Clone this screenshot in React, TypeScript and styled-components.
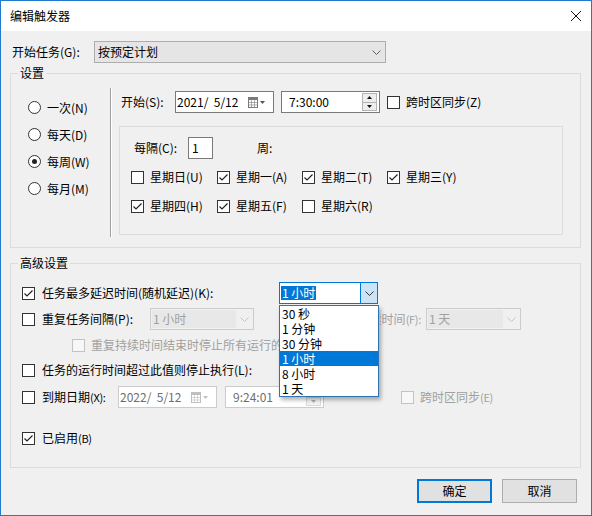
import React from "react";
import styled, { createGlobalStyle } from "styled-components";

const GlobalStyle = createGlobalStyle`
  * { box-sizing: border-box; }
  html, body { margin: 0; padding: 0; background: #f0f0f0; }
  body {
    font-family: "Noto Sans CJK SC", "Noto Sans", sans-serif;
    font-size: 12px;
    line-height: 16px;
    color: #000;
  }
`;

const Dialog = styled.div`
  width: 592px;
  height: 516px;
  border: 1px solid #1f7ad0;
  background: #f0f0f0;
  display: flex;
  flex-direction: column;
  overflow: hidden;
`;

const TitleBar = styled.div`
  flex: none;
  height: 30px;
  background: #fff;
  display: flex;
  align-items: center;
  justify-content: space-between;
  padding: 0 10px 0 9px;
`;

const TitleText = styled.span`
  font-size: 12px;
`;

const CloseIcon = styled.svg`
  display: block;
`;

const Body = styled.div`
  flex: 1;
  display: flex;
  flex-direction: column;
  padding: 10px 10px 0 9px;
`;

const TaskRow = styled.div`
  display: flex;
  align-items: center;
  height: 22px;
`;

const TaskLabel = styled.span`
  width: 84px;
  padding-left: 2px;
  white-space: nowrap;
`;

type ComboVariant = "static" | "open" | "disabled";

const ComboBox = styled.div<{ $width: number; $variant: ComboVariant; $ml?: number }>`
  position: relative;
  flex: none;
  width: ${(p) => p.$width}px;
  height: 22px;
  margin-left: ${(p) => p.$ml ?? 0}px;
  display: flex;
  align-items: stretch;
  border: 1px solid
    ${(p) => (p.$variant === "open" ? "#0078d7" : p.$variant === "disabled" ? "#cccccc" : "#adadad")};
  background: ${(p) => (p.$variant === "open" ? "#fff" : p.$variant === "disabled" ? "#f0f0f0" : "#e5e5e5")};
  color: ${(p) => (p.$variant === "disabled" ? "#a0a0a0" : "#000")};
`;

const ComboField = styled.div<{ $variant: ComboVariant }>`
  flex: 1;
  display: flex;
  align-items: center;
  white-space: pre;
  padding-left: ${(p) => (p.$variant === "static" ? 3 : 1)}px;
  margin: ${(p) => (p.$variant === "disabled" ? "1px 0 1px 1px" : "0")};
  background: ${(p) => (p.$variant === "disabled" ? "#e8e8e8" : "transparent")};
`;

const Selection = styled.span`
  background: #0078d7;
  color: #fff;
  padding: 0 1px;
  line-height: 14px;
`;

const ComboArrow = styled.div<{ $variant: ComboVariant }>`
  flex: none;
  width: 17px;
  display: flex;
  align-items: center;
  justify-content: center;
  background: ${(p) => (p.$variant === "open" ? "#cce4f7" : "transparent")};
  border-left: ${(p) => (p.$variant === "open" ? "1px solid #0078d7" : "none")};
`;

const DropList = styled.ul`
  position: absolute;
  top: 22px;
  left: -1px;
  width: 100px;
  margin: 0;
  padding: 0;
  list-style: none;
  background: #fff;
  border: 1px solid #2f73b5;
  box-shadow: 2px 3px 4px rgba(0, 0, 0, 0.3);
  z-index: 10;
`;

const DropItem = styled.li<{ $active?: boolean }>`
  height: 15px;
  line-height: 15px;
  padding-left: 2px;
  white-space: pre;
  background: ${(p) => (p.$active ? "#0078d7" : "transparent")};
  color: ${(p) => (p.$active ? "#fff" : "#000")};
`;

const Group = styled.fieldset<{ $mt: number; $pb: number }>`
  margin: ${(p) => p.$mt}px 0 0 0;
  padding: 0 0 ${(p) => p.$pb}px 0;
  min-width: 0;
  border: 1px solid #dcdcdc;
`;

const GroupTitle = styled.legend`
  margin-left: 7px;
  padding: 0 2px;
  line-height: 16px;
  font-size: 12px;
`;

const SettingsContent = styled.div`
  display: flex;
  align-items: flex-start;
`;

const RadioColumn = styled.div`
  width: 99px;
  padding: 13px 0 0 17px;
  display: flex;
  flex-direction: column;
`;

const RadioRow = styled.label`
  height: 27px;
  display: flex;
  align-items: center;
  gap: 6px;
  white-space: nowrap;
`;

const RadioCircle = styled.span<{ $checked?: boolean }>`
  flex: none;
  width: 13px;
  height: 13px;
  border: 1px solid #333;
  border-radius: 50%;
  background: #fff;
  display: flex;
  align-items: center;
  justify-content: center;
  &::after {
    content: "";
    display: ${(p) => (p.$checked ? "block" : "none")};
    width: 5px;
    height: 5px;
    border-radius: 50%;
    background: #222;
  }
`;

const Separator = styled.div`
  flex: none;
  margin-top: 7px;
  width: 2px;
  height: 149px;
  border-left: 1px solid #a0a0a0;
  border-right: 1px solid #fff;
`;

const RightColumn = styled.div`
  padding: 10px 0 0 7px;
  display: flex;
  flex-direction: column;
`;

const StartRow = styled.div`
  display: flex;
  align-items: center;
  height: 22px;
  padding-left: 2px;
`;

const FieldLabel = styled.span<{ $width: number }>`
  width: ${(p) => p.$width}px;
  white-space: nowrap;
`;

const FieldBox = styled.div<{ $width: number; $disabled?: boolean; $ml?: number; $pl?: number }>`
  flex: none;
  width: ${(p) => p.$width}px;
  height: 22px;
  margin-left: ${(p) => p.$ml ?? 0}px;
  padding-left: ${(p) => p.$pl ?? 1}px;
  border: 1px solid ${(p) => (p.$disabled ? "#cccccc" : "#7a7a7a")};
  background: #fff;
  color: ${(p) => (p.$disabled ? "#6d6d6d" : "#000")};
  display: flex;
  align-items: center;
  white-space: pre;
`;

const FieldText = styled.span`
  flex: 1;
`;

const PickerIcon = styled.svg`
  flex: none;
  margin-right: 7px;
  display: block;
`;

const Spin = styled.div`
  flex: none;
  width: 15px;
  height: 18px;
  margin-right: 2px;
  display: flex;
  flex-direction: column;
`;

const SpinHalf = styled.div<{ $disabled?: boolean }>`
  flex: 1;
  display: flex;
  align-items: center;
  justify-content: center;
  border: 1px solid ${(p) => (p.$disabled ? "#d9d9d9" : "#b4b4b4")};
  background: ${(p) => (p.$disabled ? "#f4f4f4" : "#eeeeee")};
  & + & {
    border-top: none;
  }
`;

const CheckItem = styled.label<{ $gap?: number; $disabled?: boolean; $ml?: number }>`
  display: inline-flex;
  align-items: center;
  gap: ${(p) => p.$gap ?? 6}px;
  margin-left: ${(p) => p.$ml ?? 0}px;
  white-space: nowrap;
  min-width: 0;
  color: ${(p) => (p.$disabled ? "#a0a0a0" : "#000")};
`;

const CheckText = styled.span<{ $clip?: number }>`
  overflow: hidden;
  max-width: ${(p) => (p.$clip ? `${p.$clip}px` : "none")};
`;

const CheckBox = styled.span<{ $disabled?: boolean }>`
  flex: none;
  width: 13px;
  height: 13px;
  border: 1px solid ${(p) => (p.$disabled ? "#c3c3c3" : "#333")};
  background: ${(p) => (p.$disabled ? "#f7f7f7" : "#fff")};
  display: flex;
  align-items: center;
  justify-content: center;
`;

const Key = styled.span<{ $small?: boolean }>`
  font-size: ${(p) => (p.$small ? "11px" : "12px")};
  letter-spacing: ${(p) => (p.$small ? "-0.3px" : "0")};
`;

const InnerBox = styled.div`
  margin-top: 13px;
  width: 444px;
  border: 1px solid #dcdcdc;
  padding: 10px 0 17px 11px;
`;

const IntervalRow = styled.div`
  display: flex;
  align-items: center;
  height: 22px;
  padding-left: 3px;
`;

const UnitLabel = styled.span`
  margin-left: 44px;
`;

const DayGrid = styled.div`
  margin-top: 7px;
  display: grid;
  grid-template-columns: 86px 85px 85px 100px;
  grid-auto-rows: 22px;
  row-gap: 7px;
  align-items: center;
`;

const AdvancedContent = styled.div`
  padding: 0 0 0 11px;
  display: flex;
  flex-direction: column;
`;

const AdvRow = styled.div<{ $mt: number; $pl?: number }>`
  display: flex;
  align-items: center;
  height: 22px;
  margin-top: ${(p) => p.$mt}px;
  padding-left: ${(p) => p.$pl ?? 0}px;
`;

const Lead = styled.div<{ $width: number }>`
  flex: none;
  width: ${(p) => p.$width}px;
  display: flex;
  align-items: center;
`;

/* label partly hidden by the open drop list: only its visible end is kept in view */
const SideLabel = styled.span<{ $ml: number; $width: number }>`
  flex: none;
  margin-left: ${(p) => p.$ml}px;
  width: ${(p) => p.$width}px;
  display: flex;
  justify-content: flex-end;
  overflow: hidden;
  padding-right: 5px;
  color: #a0a0a0;
  white-space: nowrap;
`;

const ButtonRow = styled.div`
  display: flex;
  justify-content: flex-end;
  gap: 10px;
  margin-top: 11px;
  padding-right: 4px;
`;

const DialogButton = styled.button<{ $primary?: boolean }>`
  width: 75px;
  height: 24px;
  padding: 0;
  font: inherit;
  font-size: 12px;
  color: #000;
  background: #e1e1e1;
  border: ${(p) => (p.$primary ? "2px solid #0078d7" : "1px solid #adadad")};
  display: flex;
  align-items: center;
  justify-content: center;
`;

const Chevron: React.FC<{ color?: string }> = ({ color = "#606060" }) => (
  <svg width="9" height="5" viewBox="0 0 9 5">
    <polyline points="0.5,0.5 4.5,4.5 8.5,0.5" fill="none" stroke={color} strokeWidth="1" />
  </svg>
);

const CheckMark: React.FC = () => (
  <svg width="11" height="11" viewBox="0 0 11 11">
    <polyline points="1.5,5.5 4,8 9.5,2.5" fill="none" stroke="#222" strokeWidth="1.2" />
  </svg>
);

const Check: React.FC<{
  checked?: boolean;
  disabled?: boolean;
  gap?: number;
  ml?: number;
  clip?: number;
  children: React.ReactNode;
}> = ({ checked, disabled, gap, ml, clip, children }) => (
  <CheckItem $gap={gap} $disabled={disabled} $ml={ml}>
    <CheckBox $disabled={disabled}>{checked && <CheckMark />}</CheckBox>
    <CheckText $clip={clip}>{children}</CheckText>
  </CheckItem>
);

const Combo: React.FC<{
  width: number;
  variant: ComboVariant;
  ml?: number;
  children?: React.ReactNode;
  list?: React.ReactNode;
}> = ({ width, variant, ml, children, list }) => (
  <ComboBox $width={width} $variant={variant} $ml={ml}>
    <ComboField $variant={variant}>{children}</ComboField>
    <ComboArrow $variant={variant}>
      <Chevron color={variant === "disabled" ? "#c4c4c4" : variant === "open" ? "#333" : "#606060"} />
    </ComboArrow>
    {list}
  </ComboBox>
);

const CalendarIcon: React.FC<{ disabled?: boolean }> = ({ disabled }) => {
  const c = disabled ? "#c0c0c0" : "#7a7a7a";
  const t = disabled ? "#c0c0c0" : "#555";
  return (
    <PickerIcon width="18" height="11" viewBox="0 0 18 11">
      <rect x="0.5" y="0.5" width="9" height="10" fill="#fff" stroke={c} />
      <rect x="1" y="1" width="8" height="2" fill={c} />
      <line x1="3.5" y1="3" x2="3.5" y2="10" stroke={c} strokeWidth="0.6" />
      <line x1="6.5" y1="3" x2="6.5" y2="10" stroke={c} strokeWidth="0.6" />
      <line x1="1" y1="5.5" x2="9" y2="5.5" stroke={c} strokeWidth="0.6" />
      <line x1="1" y1="8" x2="9" y2="8" stroke={c} strokeWidth="0.6" />
      <polygon points="12,4 17,4 14.5,7" fill={t} />
    </PickerIcon>
  );
};

const SpinButtons: React.FC<{ disabled?: boolean }> = ({ disabled }) => {
  const c = disabled ? "#b0b0b0" : "#111";
  return (
    <Spin>
      <SpinHalf $disabled={disabled}>
        <svg width="5" height="3" viewBox="0 0 5 3">
          <polygon points="0,3 5,3 2.5,0" fill={c} />
        </svg>
      </SpinHalf>
      <SpinHalf $disabled={disabled}>
        <svg width="5" height="3" viewBox="0 0 5 3">
          <polygon points="0,0 5,0 2.5,3" fill={c} />
        </svg>
      </SpinHalf>
    </Spin>
  );
};

const delayOptions = ["30 秒", "1 分钟", "30 分钟", "1 小时", "8 小时", "1 天"];
const days: { label: string; checked: boolean }[] = [
  { label: "星期日(U)", checked: false },
  { label: "星期一(A)", checked: true },
  { label: "星期二(T)", checked: true },
  { label: "星期三(Y)", checked: true },
  { label: "星期四(H)", checked: true },
  { label: "星期五(F)", checked: true },
  { label: "星期六(R)", checked: false },
];
const schedules = [
  { label: "一次(N)", checked: false },
  { label: "每天(D)", checked: false },
  { label: "每周(W)", checked: true },
  { label: "每月(M)", checked: false },
];

export default function App() {
  return (
    <>
      <GlobalStyle />
      <Dialog>
        <TitleBar>
          <TitleText>编辑触发器</TitleText>
          <CloseIcon width="10" height="10" viewBox="0 0 10 10">
            <line x1="0" y1="0" x2="10" y2="10" stroke="#111" strokeWidth="1" />
            <line x1="10" y1="0" x2="0" y2="10" stroke="#111" strokeWidth="1" />
          </CloseIcon>
        </TitleBar>
        <Body>
          <TaskRow>
            <TaskLabel>开始任务(G):</TaskLabel>
            <Combo width={292} variant="static">
              按预定计划
            </Combo>
          </TaskRow>

          <Group $mt={2} $pb={10}>
            <GroupTitle>设置</GroupTitle>
            <SettingsContent>
              <RadioColumn>
                {schedules.map((s) => (
                  <RadioRow key={s.label}>
                    <RadioCircle $checked={s.checked} />
                    <span>{s.label}</span>
                  </RadioRow>
                ))}
              </RadioColumn>
              <Separator />
              <RightColumn>
                <StartRow>
                  <FieldLabel $width={54}>开始(S):</FieldLabel>
                  <FieldBox $width={99}>
                    <FieldText>2021/  5/12</FieldText>
                    <CalendarIcon />
                  </FieldBox>
                  <FieldBox $width={99} $ml={7} $pl={7}>
                    <FieldText>7:30:00</FieldText>
                    <SpinButtons />
                  </FieldBox>
                  <Check ml={7}>跨时区同步(Z)</Check>
                </StartRow>
                <InnerBox>
                  <IntervalRow>
                    <FieldLabel $width={54}>每隔(C):</FieldLabel>
                    <FieldBox $width={25} $pl={3}>
                      1
                    </FieldBox>
                    <UnitLabel>周:</UnitLabel>
                  </IntervalRow>
                  <DayGrid>
                    {days.map((d) => (
                      <Check key={d.label} checked={d.checked}>
                        {d.label}
                      </Check>
                    ))}
                  </DayGrid>
                </InnerBox>
              </RightColumn>
            </SettingsContent>
          </Group>

          <Group $mt={7} $pb={18}>
            <GroupTitle>高级设置</GroupTitle>
            <AdvancedContent>
              <AdvRow $mt={11}>
                <Lead $width={257}>
                  <Check checked gap={7}>
                    任务最多延迟时间(随机延迟)(K):
                  </Check>
                </Lead>
                <Combo
                  width={99}
                  variant="open"
                  list={
                    <DropList>
                      {delayOptions.map((o) => (
                        <DropItem key={o} $active={o === "1 小时"}>
                          {o}
                        </DropItem>
                      ))}
                    </DropList>
                  }
                >
                  <Selection>1 小时</Selection>
                </Combo>
              </AdvRow>

              <AdvRow $mt={4}>
                <Lead $width={128}>
                  <Check gap={7}>重复任务间隔(P):</Check>
                </Lead>
                <Combo width={104} variant="disabled">
                  1 小时
                </Combo>
                <SideLabel $ml={126} $width={46}>
                  <span>
                    持续时间<Key $small>(F):</Key>
                  </span>
                </SideLabel>
                <Combo width={95} variant="disabled">
                  1 天
                </Combo>
              </AdvRow>

              <AdvRow $mt={4} $pl={50}>
                <Check disabled gap={6} clip={189}>
                  重复持续时间结束时停止所有运行的任务(I)
                </Check>
              </AdvRow>

              <AdvRow $mt={3}>
                <Lead $width={257}>
                  <Check gap={7}>任务的运行时间超过此值则停止执行(L):</Check>
                </Lead>
                <Combo width={99} variant="disabled" />
              </AdvRow>

              <AdvRow $mt={5}>
                <Lead $width={96}>
                  <Check gap={7}>
                    到期日期<Key $small>(X):</Key>
                  </Check>
                </Lead>
                <FieldBox $width={99} $disabled>
                  <FieldText>2022/  5/12</FieldText>
                  <CalendarIcon disabled />
                </FieldBox>
                <FieldBox $width={99} $ml={8} $pl={7} $disabled>
                  <FieldText>9:24:01</FieldText>
                  <SpinButtons disabled />
                </FieldBox>
                <Check disabled ml={77}>
                  跨时区同步<Key $small>(E)</Key>
                </Check>
              </AdvRow>

              <AdvRow $mt={19}>
                <Check checked gap={7}>
                  已启用<Key $small>(B)</Key>
                </Check>
              </AdvRow>
            </AdvancedContent>
          </Group>

          <ButtonRow>
            <DialogButton $primary>确定</DialogButton>
            <DialogButton>取消</DialogButton>
          </ButtonRow>
        </Body>
      </Dialog>
    </>
  );
}
